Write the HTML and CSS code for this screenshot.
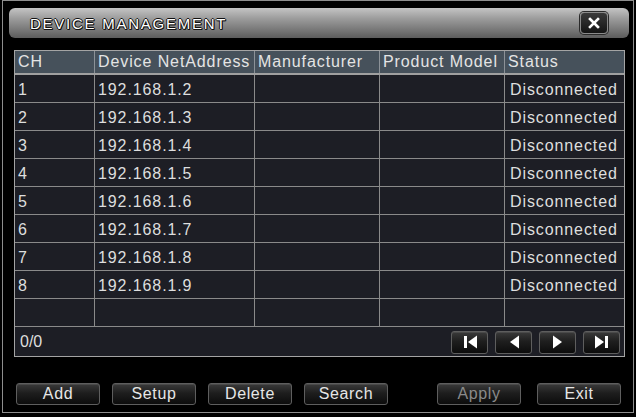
FILE: index.html
```html
<!DOCTYPE html>
<html>
<head>
<meta charset="utf-8">
<link rel="stylesheet" href="styles.css">
</head>
<body>
<div class="frame">
  <div class="titlebar">
    <span class="title">DEVICE MANAGEMENT</span>
    <button class="close" aria-label="Close">
      <svg width="12" height="12" viewBox="0 0 12 12"><path d="M2 2 L10 10 M10 2 L2 10" stroke="#fff" stroke-width="2.6" stroke-linecap="square"/></svg>
    </button>
  </div>
  <div class="grid">
    <div class="row head">
      <div class="cell">CH</div>
      <div class="cell">Device NetAddress</div>
      <div class="cell">Manufacturer</div>
      <div class="cell">Product Model</div>
      <div class="cell">Status</div>
    </div>
    <div class="row"><div class="cell">1</div><div class="cell">192.168.1.2</div><div class="cell"></div><div class="cell"></div><div class="cell status">Disconnected</div></div>
    <div class="row"><div class="cell">2</div><div class="cell">192.168.1.3</div><div class="cell"></div><div class="cell"></div><div class="cell status">Disconnected</div></div>
    <div class="row"><div class="cell">3</div><div class="cell">192.168.1.4</div><div class="cell"></div><div class="cell"></div><div class="cell status">Disconnected</div></div>
    <div class="row"><div class="cell">4</div><div class="cell">192.168.1.5</div><div class="cell"></div><div class="cell"></div><div class="cell status">Disconnected</div></div>
    <div class="row"><div class="cell">5</div><div class="cell">192.168.1.6</div><div class="cell"></div><div class="cell"></div><div class="cell status">Disconnected</div></div>
    <div class="row"><div class="cell">6</div><div class="cell">192.168.1.7</div><div class="cell"></div><div class="cell"></div><div class="cell status">Disconnected</div></div>
    <div class="row"><div class="cell">7</div><div class="cell">192.168.1.8</div><div class="cell"></div><div class="cell"></div><div class="cell status">Disconnected</div></div>
    <div class="row"><div class="cell">8</div><div class="cell">192.168.1.9</div><div class="cell"></div><div class="cell"></div><div class="cell status">Disconnected</div></div>
    <div class="row"><div class="cell"></div><div class="cell"></div><div class="cell"></div><div class="cell"></div><div class="cell"></div></div>
    <div class="footer">
      <span class="count">0/0</span>
      <div class="nav">
        <button class="navbtn" aria-label="First"><svg width="16" height="14" viewBox="0 0 16 14"><rect x="2" y="1" width="3" height="12" fill="#fff"/><path d="M15 0.5 L6 7 L15 13.5 Z" fill="#fff"/></svg></button>
        <button class="navbtn" aria-label="Previous"><svg width="12" height="14" viewBox="0 0 12 14"><path d="M11 0.5 L2 7 L11 13.5 Z" fill="#fff"/></svg></button>
        <button class="navbtn" aria-label="Next"><svg width="12" height="14" viewBox="0 0 12 14"><path d="M1 0.5 L10 7 L1 13.5 Z" fill="#fff"/></svg></button>
        <button class="navbtn" aria-label="Last"><svg width="16" height="14" viewBox="0 0 16 14"><path d="M1 0.5 L10 7 L1 13.5 Z" fill="#fff"/><rect x="11" y="1" width="3" height="12" fill="#fff"/></svg></button>
      </div>
    </div>
  </div>
  <div class="actions">
    <button class="btn">Add</button>
    <button class="btn">Setup</button>
    <button class="btn">Delete</button>
    <button class="btn">Search</button>
    <button class="btn disabled apply">Apply</button>
    <button class="btn">Exit</button>
  </div>
</div>
</body>
</html>
```
FILE: styles.css
```css
html, body {
  margin: 0;
  padding: 0;
  background: #000;
  width: 636px;
  height: 417px;
  overflow: hidden;
}
body {
  font-family: "Liberation Sans", Arial, sans-serif;
  color: #dedede;
}
.frame {
  box-sizing: border-box;
  margin-left: 2px;
  width: 632px;
  height: 413px;
  border: 1px solid #8e8e8e;
  padding: 7px 0 0 6px;
  display: flex;
  flex-direction: column;
}
.titlebar {
  box-sizing: border-box;
  width: 620px;
  height: 30px;
  border-radius: 6px;
  background: linear-gradient(to bottom, #c4c4c4 0%, #9c9c9c 35%, #7a7a7a 70%, #5c5c5c 100%);
  display: flex;
  align-items: center;
  justify-content: space-between;
  padding: 0 21px 0 21px;
}
.title {
  font-size: 15px;
  letter-spacing: 1.75px;
  color: #fff;
  text-shadow: 1px 0 0 #111, -1px 0 0 #111, 0 1px 0 #111, 0 -1px 0 #111, 1px 1px 0 #111;
  padding-top: 1px;
}
.close {
  box-sizing: border-box;
  width: 28px;
  height: 22px;
  margin: 0;
  padding: 0;
  border: 1px solid #8a8a8a;
  border-radius: 4px;
  background: linear-gradient(to bottom, #3a3a3a, #141414);
  display: flex;
  align-items: center;
  justify-content: center;
  box-shadow: 0 0 0 1px #2a2a2a;
}
.grid {
  box-sizing: border-box;
  margin: 12px 0 0 5px;
  width: 611px;
  border: 1px solid #a4a4a4;
  background: #1d1e25;
  font-size: 16px;
  letter-spacing: 0.9px;
}
.row {
  display: grid;
  grid-template-columns: 80px 160px 125px 125px 1fr;
  height: 28px;
  box-sizing: border-box;
  border-bottom: 1px solid #8a8a8a;
}
.row.head {
  height: 24px;
  background: #46515b;
  border-bottom: 2px solid #a0a0a0;
}
.cell {
  box-sizing: border-box;
  border-right: 1px solid #8a8a8a;
  padding: 2px 0 0 3px;
  display: flex;
  align-items: center;
  white-space: nowrap;
  overflow: hidden;
}
.head .cell {
  padding-top: 0;
}
.cell:last-child {
  border-right: none;
}
.head .cell {
  border-right-color: #8c9298;
  color: #e4e4e4;
}
.cell.status {
  padding-left: 5px;
}
.footer {
  height: 29px;
  display: flex;
  align-items: center;
  justify-content: space-between;
  padding: 0 4px 0 4px;
}
.count {
  letter-spacing: 0;
  padding-left: 1px;
}
.nav {
  display: flex;
  gap: 7px;
  padding-top: 1px;
}
.navbtn, .btn {
  box-sizing: border-box;
  margin: 0;
  padding: 0;
  border: 1px solid #5e5e5e;
  border-radius: 3px;
  background: linear-gradient(to bottom, #3a3a3a 0%, #1e1e1e 45%, #0c0c0c 100%);
  box-shadow: inset 0 1px 0 #4a4a4a;
}
.navbtn {
  width: 37px;
  height: 23px;
  display: flex;
  align-items: center;
  justify-content: center;
}
.actions {
  display: flex;
  gap: 12px;
  margin: 26px 0 0 7px;
}
.btn {
  width: 84px;
  height: 22px;
  font-family: "Liberation Sans", Arial, sans-serif;
  font-size: 16px;
  letter-spacing: 0.6px;
  color: #e6e6e6;
  line-height: 20px;
}
.btn.apply {
  margin-left: 37px;
  margin-right: 4px;
}
.btn.disabled {
  color: #8a8a8a;
}
```
